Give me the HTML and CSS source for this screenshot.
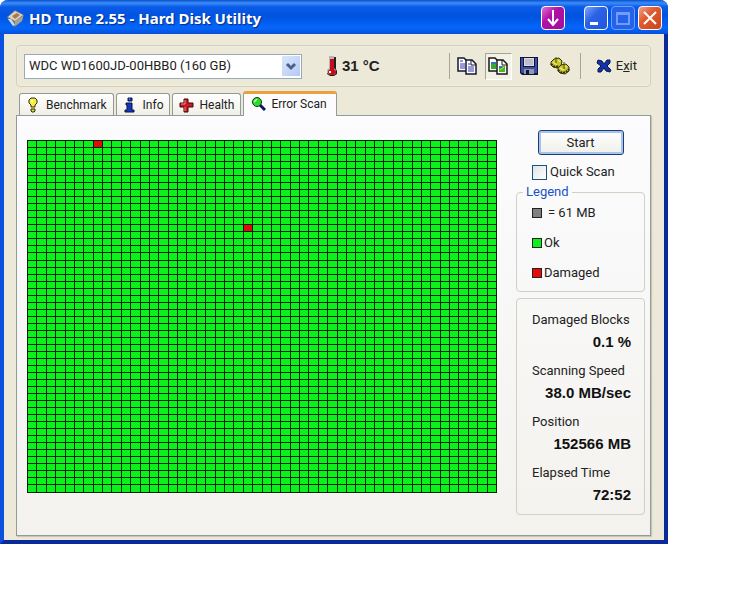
FILE: index.html
```
<!DOCTYPE html>
<html lang="en">

<head>
    <meta charset="utf-8">
    <meta name="viewport" content="width=device-width, initial-scale=1.0">
    <title>HD Tune 2.55 - Hard Disk Utility</title>
    <link rel="stylesheet" href="styles.css">
</head>

<body>
    <div class="window">
        <header class="titlebar">
            <svg class="app-icon" width="20" height="20" viewBox="0 0 20 20">
                <path d="M1 9 9 2l9 5-2 6-7 6-6-6z" fill="#77787a"/>
                <path d="M2 9 9 3l8 4-8 6z" fill="#d8d3c6"/>
                <path d="M6 8l5-3 3 2-5 4z" fill="#a87850"/>
                <path d="M9 13l8-5-1 5-7 5z" fill="#a5a29b"/>
                <path d="M2 11l5 7 2-1-4-6z" fill="#c8e0f4"/>
            </svg>
            <h1>HD Tune 2.55 - Hard Disk Utility</h1>
            <button class="caption tray" aria-label="Minimize to tray">
                <svg width="22" height="22" viewBox="0 0 22 22"><path d="M11 3v15M6 12l5 6 5-6" fill="none" stroke="#fff" stroke-width="2"/></svg>
            </button>
            <button class="caption minimize" aria-label="Minimize">
                <svg width="22" height="22" viewBox="0 0 22 22"><path d="M5 15h8v3H5z" fill="#fff"/></svg>
            </button>
            <button class="caption maximize" aria-label="Maximize" disabled>
                <svg width="22" height="22" viewBox="0 0 22 22"><path d="M5 6h12v11H5zM5 7h12" fill="none" stroke="#6f9dfa" stroke-width="2"/></svg>
            </button>
            <button class="caption close" aria-label="Close">
                <svg width="22" height="22" viewBox="0 0 22 22"><path d="M5 5l12 12M17 5L5 17" stroke="#fff" stroke-width="2"/></svg>
            </button>
        </header>

        <main class="client">
            <div class="toolbar">
                <div class="drive">
                    <select aria-label="Drive">
                        <option>WDC WD1600JD-00HBB0 (160 GB)</option>
                    </select>
                    <span class="drive-arrow">
                        <svg width="18" height="20" viewBox="0 0 18 20"><path d="M5 8l4 4 4-4" fill="none" stroke="#4d6185" stroke-width="3"/></svg>
                    </span>
                </div>
                <div class="temperature">
                    <svg width="12" height="22" viewBox="0 0 12 22">
                        <path d="M4 2h6v12l1 2v3l-3 2H4l-3-2v-3l3-3z" fill="#222"/>
                        <path d="M3 1h5v12l2 2v3l-2 2H4l-3-2v-3l2-2z" fill="#b8b4b4"/>
                        <path d="M4 4h4v10l2 2v2l-2 2H4l-2-2v-2l2-2z" fill="#c5101c"/>
                        <path d="M3 16h2v2H3z" fill="#fff"/>
                    </svg>
                    <span>31 °C</span>
                </div>
                <div class="tools">
                    <button class="tool" aria-label="Copy info">
                        <svg width="20" height="20" viewBox="0 0 20 20">
                            <path d="M1 2h6l3 3v10H1z" fill="#fff" stroke="#17172f" stroke-width="1.5"/>
                            <path d="M3 5h3M3 8h5M3 10h5M3 12h5" stroke="#3434ac"/>
                            <path d="M9 4h6l4 4v10H9z" fill="#fff" stroke="#17172f" stroke-width="1.5"/>
                            <path d="M14 4v5h5" fill="none" stroke="#17172f"/>
                            <path d="M11 8h2M11 11h6M11 13h6M11 15h6" stroke="#3434ac"/>
                        </svg>
                    </button>
                    <button class="tool pressed" aria-label="Copy screenshot">
                        <svg width="20" height="20" viewBox="0 0 20 20">
                            <path d="M1 2h6l3 3v10H1z" fill="#fff" stroke="#171717" stroke-width="1.5"/>
                            <path d="M3 7h5v6H3z" fill="#36a936"/>
                            <path d="M3 6h5v2H3z" fill="#3872bd"/>
                            <path d="M9 4h6l4 4v10H9z" fill="#fff" stroke="#171717" stroke-width="1.5"/>
                            <path d="M14 4v5h5" fill="none" stroke="#171717"/>
                            <path d="M11 10h6v6h-6z" fill="#46b52a"/>
                            <path d="M11 10h3v2h-3z" fill="#3872bd"/>
                            <path d="M12 14l4-3" stroke="#c5e34b"/>
                        </svg>
                    </button>
                    <button class="tool" aria-label="Save">
                        <svg width="20" height="20" viewBox="0 0 20 20">
                            <path d="M1 1h18v18H3l-2-2z" fill="#10133c"/>
                            <path d="M2 2h2v9h12V2h2v15H3l-1-1z" fill="#3b4fa6"/>
                            <path d="M5 2h10v8H5z" fill="#dcdce4"/>
                            <path d="M6 4h8M6 6h8M6 8h8" stroke="#9ea0b0"/>
                            <path d="M5 13h10v5H5z" fill="#9298ac"/>
                            <path d="M7 14h3v4H7z" fill="#11143b"/>
                        </svg>
                    </button>
                    <button class="tool" aria-label="Options">
                        <svg width="20" height="20" viewBox="0 0 20 20">
                            <path d="M1 6l3-3 5-1 3 3-1 5-4 2-4-1-2-2z" fill="#c9c52c" stroke="#34320a"/>
                            <path d="M8 12l3-3 5-1 3 3v4l-4 3-5-1-2-2z" fill="#c9c52c" stroke="#34320a"/>
                            <path d="M1 8l4 3 4-1M8 14l4 3 4-1 3-3" fill="none" stroke="#34320a" stroke-width="2" stroke-dasharray="2 1"/>
                            <path d="M6 7V1M14 13V6" stroke="#55520b"/>
                            <path d="M3 6l4 3M8 4l2 2M10 12l4 2M15 10l2 1" stroke="#f7f594"/>
                        </svg>
                    </button>
                    <button class="exit">
                        <svg width="16" height="16" viewBox="0 0 16 16"><path d="M2 2l4 1 2 3 3-4h3v3l-3 3 4 4-1 2-4-1-2-3-3 4H2v-3l3-3-4-3z" fill="#1234a8" stroke="#0a1648"/></svg>
                        <span>E<u>x</u>it</span>
                    </button>
                </div>
            </div>

            <div class="tabs" role="tablist">
                <button class="tab" role="tab">
                    <svg width="15" height="16" viewBox="0 0 15 16">
                        <path d="M5 1h4l2 2v3L9 8v2H5V8L3 6V3z" fill="#f5ef3b" stroke="#2c2b0b"/>
                        <path d="M5 3h2v2H5z" fill="#fffde0"/>
                        <path d="M5 12h4v2l-1 1H6l-1-1z" fill="#e3dc32" stroke="#2c2b0b"/>
                    </svg>
                    Benchmark
                </button>
                <button class="tab" role="tab">
                    <svg width="15" height="16" viewBox="0 0 15 16">
                        <path d="M5 1h4v3H5zM3 6h6v7h2v2H2v-2h2V8H3z" fill="#1535b8" stroke="#0a1545"/>
                        <path d="M6 2h1" stroke="#8cb8f0"/>
                    </svg>
                    Info
                </button>
                <button class="tab" role="tab">
                    <svg width="15" height="16" viewBox="0 0 15 16">
                        <path d="M5 2h4v4h5v4H9v5H5v-5H1V6h4z" fill="#cb1b20" stroke="#3d0608"/>
                        <path d="M6 14V10M2 7h4V3" fill="none" stroke="#f28a86"/>
                    </svg>
                    Health
                </button>
                <button class="tab active" role="tab" aria-selected="true">
                    <svg width="15" height="16" viewBox="0 0 15 16">
                        <path d="M9 9l5 5" stroke="#10136a" stroke-width="3"/>
                        <circle cx="6" cy="6" r="4.5" fill="#27dd27" stroke="#123c12"/>
                        <path d="M3 6l3-3" stroke="#c6ffc0" stroke-width="1.5"/>
                    </svg>
                    Error Scan
                </button>
            </div>

            <section class="panel" role="tabpanel">
                <div class="map" id="map"></div>

                <aside class="side">
                    <button class="start">Start</button>
                    <label class="quick"><input type="checkbox">Quick Scan</label>

                    <fieldset class="group">
                        <legend>Legend</legend>
                        <ul class="keys">
                            <li class="spaced"><i class="block size"></i>= 61 MB</li>
                            <li><i class="block ok"></i>Ok</li>
                            <li><i class="block damaged"></i>Damaged</li>
                        </ul>
                    </fieldset>

                    <dl class="stats">
                        <dt>Damaged Blocks</dt>
                        <dd>0.1 %</dd>
                        <dt>Scanning Speed</dt>
                        <dd>38.0 MB/sec</dd>
                        <dt>Position</dt>
                        <dd>152566 MB</dd>
                        <dt>Elapsed Time</dt>
                        <dd>72:52</dd>
                    </dl>
                </aside>
            </section>
        </main>
    </div>
    <script>
        // 50 x 50 blocks, numbered row by row
        const damaged = [7, 12 * 50 + 23];
        const map = document.getElementById("map");
        for (let i = 0; i < 2500; i++) {
            const block = document.createElement("i");
            if (damaged.includes(i)) {
                block.className = "damaged";
            }
            map.appendChild(block);
        }
    </script>
</body>

</html>
```
FILE: styles.css
```
* {
    box-sizing: border-box;
}

body {
    background: #fff;
    color: #222;
    font: 13px/20px Roboto, "Liberation Sans", sans-serif;
    margin: 0 82px 0 0;
}

button, select, input {
    color: inherit;
    font: inherit;
    margin: 0;
    padding: 0;
}

svg {
    display: block;
    flex: none;
}

.window {
    background: #ece9d8;
    border: 4px solid #0c50e0;
    border-bottom-color: #0a2a9c;
    border-right-color: #0a2a9c;
    border-top: 0;
    border-radius: 8px 8px 0 0;
}

.titlebar {
    align-items: center;
    background: linear-gradient(#0a50cc 0, #3a8cf8 3px, #0a5be8 7px, #0053e0 16px, #0566fb 28px, #0450d8 34px);
    border-radius: 8px 8px 0 0;
    display: flex;
    gap: 3px;
    height: 34px;
    margin: 0 -4px;
    padding: 2px 6px 0;
}

.titlebar h1 {
    color: #fff;
    flex: 1;
    font: bold 15px/20px "Noto Sans", "Open Sans", sans-serif;
    margin: 0;
    text-shadow: 1px 1px 1px #0a2c84;
}

.caption {
    background: linear-gradient(135deg, #7ea6f8, #2c62e8 40%, #2056dc);
    border: 1px solid #fff;
    border-radius: 4px;
    height: 24px;
    width: 24px;
}

.caption.tray {
    background: linear-gradient(135deg, #e070d0, #b010a8 40%, #a0109c);
    margin-right: 16px;
}

.caption.maximize {
    background: #2462ea;
    border-color: #6f9dfa;
}

.caption.close {
    background: linear-gradient(135deg, #f0a088, #e05a30 40%, #cc4418);
}

.client {
    padding: 11px 13px 4px 12px;
}

.toolbar {
    align-items: center;
    border: 1px solid #d3cfbd;
    border-radius: 4px;
    box-shadow: inset 0 0 0 1px #f1eee0;
    display: flex;
    height: 42px;
    padding: 0 13px 0 7px;
}

.drive {
    position: relative;
    width: 278px;
}

.drive select {
    appearance: none;
    background: #fff;
    border: 1px solid #9aabb8;
    border-radius: 0;
    display: block;
    height: 25px;
    padding: 0 24px 0 4px;
    width: 100%;
}

.drive-arrow {
    background: linear-gradient(135deg, #dbe6fe, #b5c9f6);
    pointer-events: none;
    position: absolute;
    right: 2px;
    top: 2px;
}

.temperature {
    align-items: center;
    display: flex;
    font: bold 15px/20px "Liberation Sans", sans-serif;
    gap: 4px;
    margin-left: 24px;
}

.tools {
    align-items: center;
    border-left: 1px solid #aaa796;
    display: flex;
    gap: 4px;
    height: 26px;
    margin-left: auto;
    padding-left: 4px;
}

.tool {
    align-items: center;
    background: none;
    border: 1px solid transparent;
    display: flex;
    height: 27px;
    justify-content: center;
    width: 27px;
}

.tool.pressed {
    background: #f3f1e6;
    border-color: #a8a594 #fff #fff #a8a594;
}

.exit {
    align-items: center;
    background: none;
    border: 0;
    border-left: 1px solid #aaa796;
    display: flex;
    gap: 4px;
    height: 26px;
    margin-left: 2px;
    padding-left: 15px;
}

.tabs {
    align-items: flex-end;
    display: flex;
    font-size: 12px;
    gap: 2px;
    height: 28px;
    padding-left: 3px;
}

.tab {
    align-items: center;
    background: linear-gradient(#fff, #f0efe6);
    border: 1px solid #919b9c;
    border-bottom: 0;
    border-radius: 3px 3px 0 0;
    display: flex;
    gap: 5px;
    height: 22px;
    padding: 0 6px;
}

.tab.active {
    background: #fcfcfe;
    border-top: 3px solid #eba23c;
    height: 25px;
    margin: 0 0 -1px;
    padding: 0 9px 3px 7px;
    z-index: 1;
}

.panel {
    background: linear-gradient(#fcfcfe, #f3f2ee);
    border: 1px solid #919b9c;
    box-shadow: 1px 1px 1px #c9c6b6;
    display: flex;
    gap: 19px;
    padding: 14px 5px 20px 10px;
}

.map {
    align-self: flex-start;
    aspect-ratio: 4 / 3;
    background: #002400;
    display: grid;
    flex: 1;
    gap: 1px;
    grid-template: repeat(50, 1fr) / repeat(50, 1fr);
    margin-top: 10px;
    min-width: 0;
    padding: 1px;
}

.map i {
    background: #0cf01c;
}

.map .damaged {
    background: #e80808;
}

.side {
    display: flex;
    flex-direction: column;
    width: 129px;
}

.start {
    align-self: center;
    background: linear-gradient(#fff, #f0efe8);
    border: 1px solid #1c3e74;
    border-radius: 3px;
    box-shadow: inset 0 0 0 2px #a6c2ee;
    height: 25px;
    width: 86px;
}

.quick {
    align-items: center;
    display: flex;
    gap: 3px;
    margin: 7px 0 2px 16px;
}

.quick input {
    appearance: none;
    background: linear-gradient(135deg, #dce4e8, #fff);
    border: 1px solid #1c5180;
    height: 15px;
    width: 15px;
}

.group {
    border: 1px solid #d0d0c4;
    border-radius: 4px;
    margin: 0;
    padding: 3px 15px 8px;
}

.group legend {
    color: #2050c8;
    line-height: 16px;
    margin-left: -9px;
    padding: 0 3px;
}

.keys {
    display: grid;
    gap: 10px;
    list-style: none;
    margin: 0;
    padding: 0;
}

.keys li {
    align-items: center;
    display: flex;
    gap: 2px;
}

.keys .spaced {
    gap: 6px;
}

.block {
    border: 1px solid #222;
    height: 10px;
    width: 10px;
}

.block.size {
    background: #808080;
}

.block.ok {
    background: #0cf01c;
}

.block.damaged {
    background: #e80808;
}

.stats {
    border: 1px solid #d0d0c4;
    border-radius: 4px;
    margin: 6px 0 0;
    padding: 10px 13px 8px 15px;
}

.stats dt {
    line-height: 22px;
}

.stats dd {
    color: #111;
    font: bold 15px/22px "Liberation Sans", sans-serif;
    margin: 0 0 7px;
    text-align: right;
}

.stats dd:last-child {
    margin: 0;
}
```
